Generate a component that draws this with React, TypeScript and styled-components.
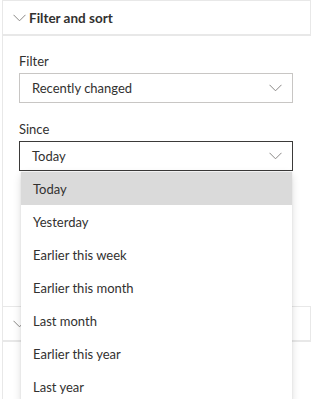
import styled, { createGlobalStyle } from "styled-components";

const GlobalStyle = createGlobalStyle`
  body {
    margin: 0;
    background: #ffffff;
    font-family: Lato, "Open Sans", sans-serif;
    color: #323130;
  }
`;

const Panel = styled.div`
  width: 311px;
  height: 399px;
  overflow: hidden;
  padding-left: 2px;
  box-sizing: border-box;
`;

const SectionHeader = styled.div`
  height: 36px;
  box-sizing: border-box;
  display: flex;
  align-items: center;
  gap: 3px;
  padding-left: 10px;
  border: 1px solid #e8e8e8;
  border-bottom-width: 2px;
`;

const Title = styled.span`
  font-size: 13.5px;
  font-weight: 700;
  color: #323130;
`;

const SectionBody = styled.div<{ $height: number }>`
  height: ${(p) => p.$height}px;
  box-sizing: border-box;
  border-left: 1px solid #e8e8e8;
  padding: 15px 18px 0 16px;
`;

const Field = styled.div`
  margin-bottom: 16px;
`;

const Label = styled.div`
  font-size: 13px;
  line-height: 20px;
  margin-bottom: 2px;
  color: #323130;
`;

const SelectWrap = styled.div`
  position: relative;
`;

const Select = styled.div<{ $focused?: boolean }>`
  height: 30px;
  box-sizing: border-box;
  display: flex;
  align-items: center;
  justify-content: space-between;
  padding: 0 10px 0 12px;
  border: 1px solid ${(p) => (p.$focused ? "#3b3a39" : "#c8c6c4")};
  font-size: 13px;
  color: #323130;
`;

const Menu = styled.ul`
  position: absolute;
  top: 100%;
  left: 2px;
  right: 1px;
  margin: 1px 0 0;
  padding: 0;
  list-style: none;
  background: #ffffff;
  box-shadow: 0 3px 8px rgba(0, 0, 0, 0.14), 0 0 2px rgba(0, 0, 0, 0.08);
  z-index: 2;
`;

const MenuItem = styled.li<{ $selected?: boolean }>`
  height: 33px;
  display: flex;
  align-items: center;
  padding-left: 12px;
  font-size: 13px;
  color: #323130;
  background: ${(p) => (p.$selected ? "#dadada" : "#ffffff")};
`;

function Chevron({ color = "#8a8886" }: { color?: string }) {
  return (
    <svg width="13" height="8" viewBox="0 0 13 8">
      <polyline
        points="0.5,0.8 6.5,6.8 12.5,0.8"
        fill="none"
        stroke={color}
        strokeWidth="1"
      />
    </svg>
  );
}

const options = [
  "Today",
  "Yesterday",
  "Earlier this week",
  "Earlier this month",
  "Last month",
  "Earlier this year",
  "Last year",
];

export default function App() {
  return (
    <Panel>
      <GlobalStyle />
      <SectionHeader>
        <Chevron />
        <Title>Filter and sort</Title>
      </SectionHeader>
      <SectionBody $height={270}>
        <Field>
          <Label>Filter</Label>
          <Select>
            Recently changed
            <Chevron />
          </Select>
        </Field>
        <Field>
          <Label>Since</Label>
          <SelectWrap>
            <Select $focused>
              Today
              <Chevron />
            </Select>
            <Menu>
              {options.map((o, i) => (
                <MenuItem key={o} $selected={i === 0}>
                  {o}
                </MenuItem>
              ))}
            </Menu>
          </SelectWrap>
        </Field>
      </SectionBody>
      <SectionHeader>
        <Chevron />
      </SectionHeader>
      <SectionBody $height={60} />
    </Panel>
  );
}
